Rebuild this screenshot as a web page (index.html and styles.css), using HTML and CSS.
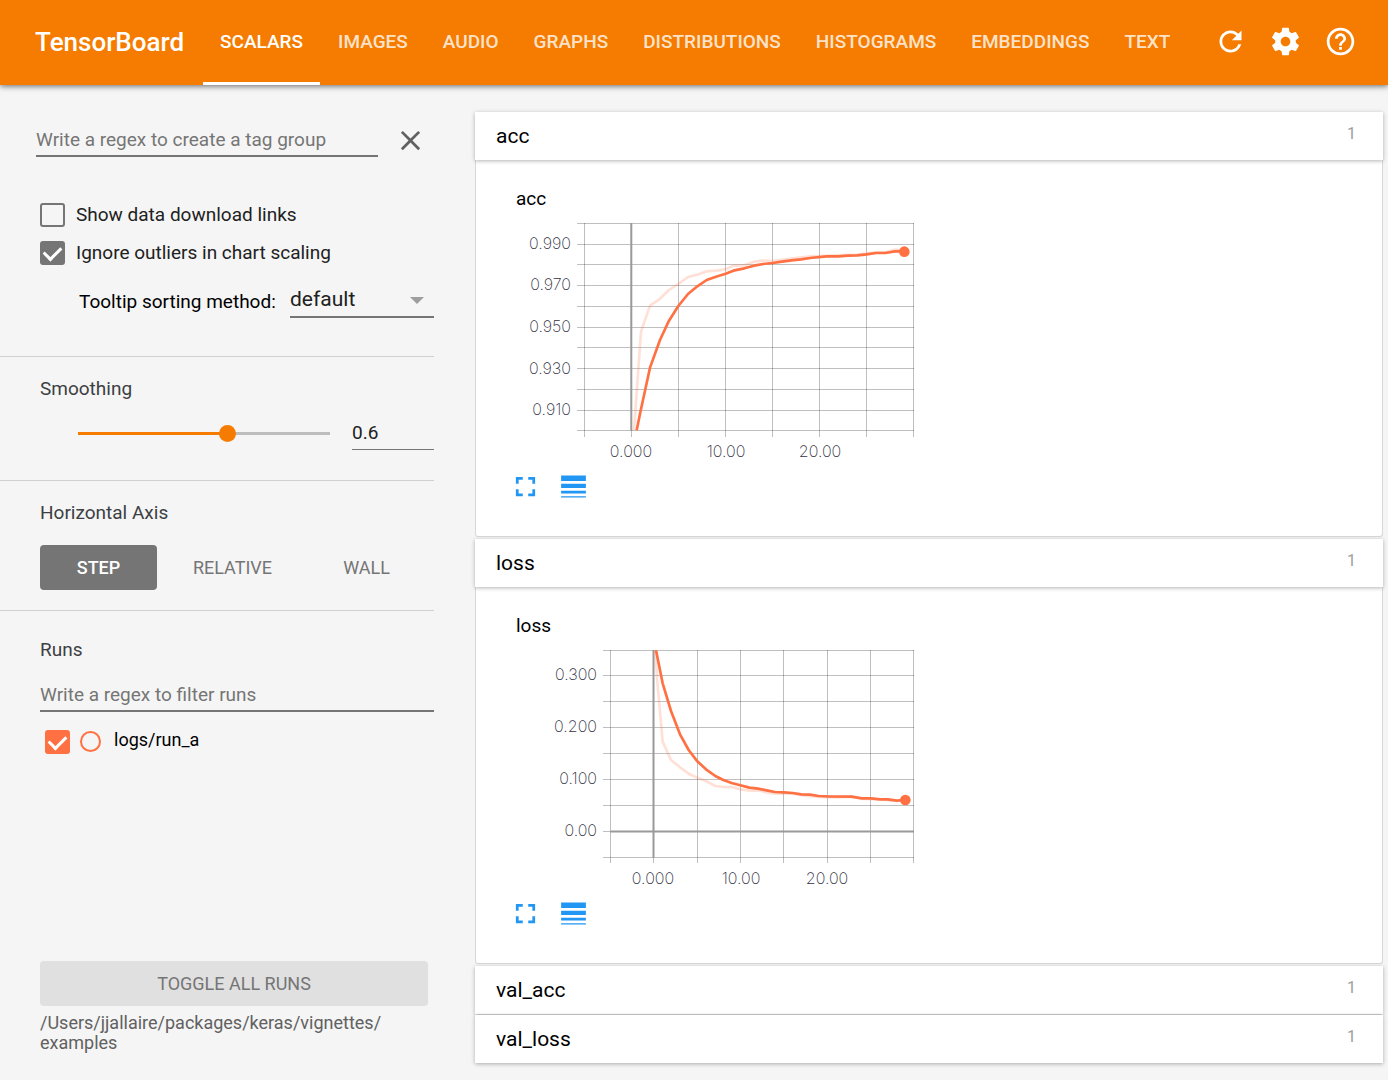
FILE: index.html
```html
<!DOCTYPE html>
<html lang="en">
<head>
<meta charset="utf-8">
<meta name="viewport" content="width=device-width, initial-scale=1">
<title>TensorBoard</title>
<link rel="stylesheet" href="styles.css">
</head>
<body>
<header class="toolbar">
  <h1 class="brand">TensorBoard</h1>
  <nav class="tabs">
    <a class="tab tab-active" href="#scalars">SCALARS</a>
    <a class="tab" href="#images">IMAGES</a>
    <a class="tab" href="#audio">AUDIO</a>
    <a class="tab" href="#graphs">GRAPHS</a>
    <a class="tab" href="#distributions">DISTRIBUTIONS</a>
    <a class="tab" href="#histograms">HISTOGRAMS</a>
    <a class="tab" href="#embeddings">EMBEDDINGS</a>
    <a class="tab" href="#text">TEXT</a>
  </nav>
  <div class="actions">
    <button class="icon-button" type="button" aria-label="Refresh">
      <svg class="icon" viewBox="0 0 24 24"><path d="M17.65 6.35C16.2 4.9 14.21 4 12 4c-4.42 0-7.99 3.58-7.99 8s3.57 8 7.99 8c3.73 0 6.84-2.55 7.73-6h-2.08c-.82 2.33-3.04 4-5.65 4-3.31 0-6-2.69-6-6s2.69-6 6-6c1.66 0 3.14.69 4.22 1.78L13 11h7V4l-2.35 2.35z"/></svg>
    </button>
    <button class="icon-button" type="button" aria-label="Settings">
      <svg class="icon" viewBox="0 0 24 24"><path d="M19.43 12.98c.04-.32.07-.64.07-.98s-.03-.66-.07-.98l2.11-1.65c.19-.15.24-.42.12-.64l-2-3.46c-.12-.22-.39-.3-.61-.22l-2.49 1c-.52-.4-1.08-.73-1.69-.98l-.38-2.65C14.46 2.18 14.25 2 14 2h-4c-.25 0-.46.18-.49.42l-.38 2.65c-.61.25-1.17.59-1.69.98l-2.49-1c-.23-.09-.49 0-.61.22l-2 3.46c-.13.22-.07.49.12.64l2.11 1.65c-.04.32-.07.65-.07.98s.03.66.07.98l-2.11 1.65c-.19.15-.24.42-.12.64l2 3.46c.12.22.39.3.61.22l2.49-1c.52.4 1.08.73 1.69.98l.38 2.65c.03.24.24.42.49.42h4c.25 0 .46-.18.49-.42l.38-2.65c.61-.25 1.17-.59 1.69-.98l2.49 1c.23.09.49 0 .61-.22l2-3.46c.12-.22.07-.49-.12-.64l-2.11-1.65zM12 15.5c-1.93 0-3.5-1.57-3.5-3.5s1.57-3.5 3.5-3.5 3.5 1.57 3.5 3.5-1.57 3.5-3.5 3.5z"/></svg>
    </button>
    <button class="icon-button" type="button" aria-label="Help">
      <svg class="icon" viewBox="0 0 24 24"><path d="M11 18h2v-2h-2v2zm1-16C6.48 2 2 6.48 2 12s4.48 10 10 10 10-4.48 10-10S17.52 2 12 2zm0 18c-4.41 0-8-3.59-8-8s3.59-8 8-8 8 3.59 8 8-3.59 8-8 8zm0-14c-2.21 0-4 1.79-4 4h2c0-1.1.9-2 2-2s2 .9 2 2c0 2-3 1.75-3 5h2c0-2.25 3-2.5 3-5 0-2.21-1.79-4-4-4z"/></svg>
    </button>
  </div>
</header>

<div class="layout">
  <aside class="sidebar">
    <section class="panel panel-options">
      <div class="tag-group">
        <input class="field" type="text" placeholder="Write a regex to create a tag group" aria-label="Tag group regex">
        <button class="icon-button icon-close" type="button" aria-label="Clear">
          <svg class="icon" viewBox="0 0 24 24"><path d="M19 6.41L17.59 5 12 10.59 6.41 5 5 6.41 10.59 12 5 17.59 6.41 19 12 13.41 17.59 19 19 17.59 13.41 12z"/></svg>
        </button>
      </div>
      <div class="options">
        <label class="option"><input class="check" type="checkbox">Show data download links</label>
        <label class="option"><input class="check" type="checkbox" checked>Ignore outliers in chart scaling</label>
      </div>
      <div class="sorting">
        <label class="sorting-label" for="sort">Tooltip sorting method:</label>
        <div class="dropdown">
          <select class="field select" id="sort">
            <option>default</option>
            <option>descending</option>
            <option>ascending</option>
            <option>nearest</option>
          </select>
        </div>
      </div>
    </section>

    <section class="panel panel-smoothing">
      <h2 class="panel-title" id="smoothing">Smoothing</h2>
      <div class="smoothing">
        <input class="slider" type="range" min="0" max="1" step="0.1" value="0.6" aria-labelledby="smoothing">
        <input class="field number" type="text" value="0.6" aria-labelledby="smoothing">
      </div>
    </section>

    <section class="panel panel-axis">
      <h2 class="panel-title">Horizontal Axis</h2>
      <div class="axis-modes">
        <button class="mode mode-active" type="button">STEP</button>
        <button class="mode" type="button">RELATIVE</button>
        <button class="mode" type="button">WALL</button>
      </div>
    </section>

    <section class="panel panel-runs">
      <h2 class="panel-title">Runs</h2>
      <input class="field" type="text" placeholder="Write a regex to filter runs" aria-label="Filter runs">
      <div class="run">
        <input class="check check-run" type="checkbox" id="run-a" checked>
        <input class="isolate" type="radio" name="isolate" aria-label="Show only logs/run_a">
        <label class="run-name" for="run-a">logs/run_a</label>
      </div>
      <div class="runs-footer">
        <button class="toggle" type="button">TOGGLE ALL RUNS</button>
        <p class="logdir">/Users/jjallaire/packages/keras/vignettes/<wbr>examples</p>
      </div>
    </section>
  </aside>

  <main class="content">
    <section class="category">
      <button class="category-head" type="button"><span>acc</span><span class="count">1</span></button>
      <div class="category-body">
        <h3 class="chart-title">acc</h3>
        <svg class="chart" viewBox="516 214 400 252" role="img" aria-label="acc by step">
          <path class="grid" d="M577 223.5H914M577 244.5H914M577 264.5H914M577 285.5H914M577 306.5H914M577 327.5H914M577 347.5H914M577 368.5H914M577 389.5H914M577 410.5H914M577 430.5H914M584.5 223V437M678.5 223V437M725.5 223V437M772.5 223V437M819.5 223V437M866.5 223V437M913.5 223V437M631.5 431V437"/>
          <path class="zero" d="M631.3 223V431"/>
          <g class="curves" transform="translate(470 180) scale(.33333)">
            <polyline class="raw" points="492,751 513,455 540,377 568,358 597,330 625,312 654,291 682,284 710,274 738,272 767,268 790,257 823,256 852,245 880,242 908,243 964,236 1020,229 1077,227 1162,224 1218,217 1246,217 1275,209 1303,210"/>
            <polyline class="smooth" points="500,751 512,692 540,563 570,480 597,422 625,378 654,342 682,319 710,300 738,290 767,281 790,272 823,265 852,257 880,252 908,249 936,245 964,241 993,238 1020,234 1070,229 1105,229 1134,227 1162,226 1190,223 1218,219 1246,219 1275,214 1303,214"/>
            <circle class="dot" cx="1303" cy="215" r="16"/>
          </g>
          <g class="ticks ticks-y">
            <text x="571" y="249">0.990</text><text x="571" y="290">0.970</text><text x="571" y="332">0.950</text><text x="571" y="374">0.930</text><text x="571" y="415">0.910</text>
          </g>
          <g class="ticks ticks-x">
            <text x="631" y="457">0.000</text><text x="726" y="457">10.00</text><text x="820" y="457">20.00</text>
          </g>
        </svg>
        <div class="chart-actions">
          <button class="icon-button" type="button" aria-label="Fit domain to data"><svg class="icon" viewBox="0 0 24 24"><path d="M7 14H5v5h5v-2H7v-3zm-2-4h2V7h3V5H5v5zm12 7h-3v2h5v-5h-2v3zM14 5v2h3v3h2V5h-5z"/></svg></button>
          <button class="icon-button" type="button" aria-label="Toggle log scale"><svg class="icon" viewBox="0 0 24 24"><path d="M3 17h18v-2H3v2zm0 3h18v-1H3v1zm0-7h18v-3H3v3zm0-9v4h18V4H3z"/></svg></button>
        </div>
      </div>
    </section>

    <section class="category">
      <button class="category-head" type="button"><span>loss</span><span class="count">1</span></button>
      <div class="category-body">
        <h3 class="chart-title">loss</h3>
        <svg class="chart" viewBox="516 641 400 252" role="img" aria-label="loss by step">
          <path class="grid" d="M603 650.5H914M603 675.5H914M603 701.5H914M603 727.5H914M603 753.5H914M603 779.5H914M603 805.5H914M603 857.5H914M603 831.5H610M610.5 650V863M697.5 650V863M740.5 650V863M783.5 650V863M827.5 650V863M870.5 650V863M913.5 650V863M653.5 858V863"/>
          <path class="zero" d="M653.5 650V858M610 831.5H914"/>
          <g class="curves" transform="translate(470 610) scale(.33333)">
            <polyline class="raw" points="556,121 562,215 578,395 603,450 630,472 656,491 682,503 708,513 736,528 760,531 785,531 811,538 840,542 870,542 890,547 915,551 970,551 1000,556 1050,561 1100,562 1140,560 1180,567 1230,568 1280,573 1306,570"/>
            <polyline class="smooth" points="558,121 578,220 603,303 630,373 656,420 682,454 708,478 736,498 760,510 785,519 811,526 838,533 864,536 890,541 915,546 942,547 968,549 994,553 1020,554 1046,558 1072,559 1145,560 1176,565 1204,565 1230,568 1254,568 1280,572 1306,570"/>
            <circle class="dot" cx="1306" cy="570" r="16"/>
          </g>
          <g class="ticks ticks-y">
            <text x="597" y="680">0.300</text><text x="597" y="732">0.200</text><text x="597" y="784">0.100</text><text x="597" y="836">0.00</text>
          </g>
          <g class="ticks ticks-x">
            <text x="653" y="884">0.000</text><text x="741" y="884">10.00</text><text x="827" y="884">20.00</text>
          </g>
        </svg>
        <div class="chart-actions">
          <button class="icon-button" type="button" aria-label="Fit domain to data"><svg class="icon" viewBox="0 0 24 24"><path d="M7 14H5v5h5v-2H7v-3zm-2-4h2V7h3V5H5v5zm12 7h-3v2h5v-5h-2v3zM14 5v2h3v3h2V5h-5z"/></svg></button>
          <button class="icon-button" type="button" aria-label="Toggle log scale"><svg class="icon" viewBox="0 0 24 24"><path d="M3 17h18v-2H3v2zm0 3h18v-1H3v1zm0-7h18v-3H3v3zm0-9v4h18V4H3z"/></svg></button>
        </div>
      </div>
    </section>

    <section class="category">
      <button class="category-head" type="button"><span>val_acc</span><span class="count">1</span></button>
    </section>
    <section class="category">
      <button class="category-head" type="button"><span>val_loss</span><span class="count">1</span></button>
    </section>
  </main>
</div>
</body>
</html>
```
FILE: styles.css
```css
* {
  box-sizing: border-box;
}

body {
  margin: 0;
  min-height: 100vh;
  display: flex;
  flex-direction: column;
  background: #f5f5f5;
  color: #000;
  font: 400 19px/24px Roboto, sans-serif;
}

button,
input,
select {
  margin: 0;
  padding: 0;
  border: 0;
  background: none;
  color: inherit;
  font: inherit;
}

h1,
h2,
h3,
p {
  margin: 0;
}

/* Toolbar */
.toolbar {
  display: flex;
  align-items: center;
  height: 85px;
  padding: 0 31px 0 35px;
  background: #f57c00;
  color: #fff;
  box-shadow: 0 1px 6px rgba(0, 0, 0, 0.6);
}

.brand {
  width: 168px;
  padding-bottom: 2px;
  font-size: 26px;
  line-height: 32px;
  font-weight: 500;
}

.tabs {
  display: flex;
  align-self: stretch;
  gap: 1px;
}

.tab {
  display: flex;
  align-items: center;
  padding: 0 17px;
  border-bottom: 3px solid transparent;
  border-top: 1px solid transparent;
  color: rgba(255, 255, 255, 0.8);
  font-size: 19px;
  font-weight: 500;
  text-decoration: none;
}

.tab-active {
  color: #fff;
  border-bottom-color: #fff;
}

.actions {
  display: flex;
  gap: 22px;
  margin-left: auto;
  padding-bottom: 2px;
}

.icon-button {
  display: flex;
  cursor: pointer;
}

.icon {
  display: block;
  width: 33px;
  height: 33px;
  fill: currentColor;
}

/* Page columns */
.layout {
  flex: 1;
  display: grid;
  grid-template-columns: 434px minmax(0, 1fr);
  column-gap: 41px;
}

.sidebar {
  display: flex;
  flex-direction: column;
}

.content {
  padding: 27px 5px 17px 0;
  display: flex;
  flex-direction: column;
  gap: 1px;
}

/* Sidebar */
.panel {
  padding: 20px 0 20px 40px;
  border-bottom: 1px solid #d0d0d0;
}

.panel-options {
  padding: 38px 0 38px 36px;
}

.panel-title {
  color: #3c4043;
  font-size: 19px;
  font-weight: 400;
  line-height: 24px;
}

.field {
  width: 100%;
  height: 34px;
  border-bottom: 2px solid #757575;
  border-radius: 0;
  color: #212121;
  outline: none;
}

.field::placeholder {
  color: #757575;
  opacity: 1;
}

.tag-group {
  display: flex;
  align-items: center;
  gap: 16px;
  padding-right: 7px;
}

.icon-close {
  color: #616161;
}

.options {
  display: grid;
  gap: 14px;
  padding: 46px 0 0 4px;
}

.option {
  display: flex;
  align-items: center;
  gap: 11px;
  color: #212121;
}

.check {
  appearance: none;
  flex: none;
  display: grid;
  place-items: start center;
  width: 25px;
  height: 24px;
  border: 2px solid #757575;
  border-radius: 3px;
}

.check:checked {
  background: #757575;
}

.check:checked::after {
  content: "";
  width: 8px;
  height: 14px;
  border: solid #fff;
  border-width: 0 3px 3px 0;
  transform: rotate(45deg);
}

.sorting {
  display: flex;
  align-items: center;
  justify-content: space-between;
  padding: 16px 0 0 43px;
}

.sorting-label {
  padding-top: 4px;
}

.dropdown {
  position: relative;
  width: 144px;
}

.dropdown::after {
  content: "";
  position: absolute;
  right: 10px;
  top: 16px;
  border: solid transparent;
  border-width: 7px 7px 0;
  border-top-color: #9e9e9e;
  pointer-events: none;
}

.select {
  appearance: none;
  height: 37px;
  font-size: 21px;
}

.smoothing {
  display: flex;
  align-items: center;
  gap: 22px;
  padding: 15px 0 10px 38px;
}

.slider {
  appearance: none;
  flex: 1;
  min-width: 0;
  height: 17px;
  background: linear-gradient(90deg, #f57c00 60%, #bdbdbd 60%) center / 100% 3px no-repeat;
}

.slider::-webkit-slider-thumb {
  appearance: none;
  width: 17px;
  height: 17px;
  border-radius: 50%;
  background: #f57c00;
}

.number {
  width: 82px;
  border-bottom-width: 1px;
}

.axis-modes {
  display: flex;
  gap: 17px;
  padding-top: 20px;
}

.mode {
  width: 117px;
  height: 45px;
  border-radius: 4px;
  color: #757575;
  font-size: 18px;
}

.mode-active {
  background: #757575;
  color: #fff;
  font-weight: 500;
}

.panel-runs {
  flex: 1;
  display: flex;
  flex-direction: column;
  padding: 27px 0 27px 40px;
  border-bottom: 0;
}

.panel-runs .field {
  margin-top: 16px;
}

.run {
  display: flex;
  align-items: center;
  gap: 10px;
  padding: 16px 0 0 5px;
}

.check-run {
  border-color: #ff7043;
}

.check-run:checked {
  background: #ff7043;
}

.isolate {
  appearance: none;
  width: 21px;
  height: 21px;
  border: 2px solid #ff7043;
  border-radius: 50%;
}

.run-name {
  padding: 0 0 3px 3px;
  font-size: 18px;
}

.runs-footer {
  margin-top: auto;
}

.toggle {
  display: block;
  width: calc(100% - 6px);
  height: 45px;
  border-radius: 4px;
  background: #e0e0e0;
  color: #757575;
  font-size: 18px;
}

.logdir {
  padding-top: 7px;
  color: #616161;
  font-size: 18px;
  line-height: 20px;
}

/* Chart categories */
.category-head {
  position: relative;
  display: flex;
  justify-content: space-between;
  width: 100%;
  height: 48px;
  padding: 12px 27px 12px 21px;
  background: #fff;
  box-shadow: 0 1px 4px rgba(0, 0, 0, 0.3);
  font-size: 21px;
  line-height: 24px;
  text-align: left;
}

.count {
  color: #9e9e9e;
  font-size: 16px;
  line-height: 20px;
}

.category-body {
  height: 377px;
  margin-bottom: 1px;
  padding: 27px 40px;
  border: 1px solid #d8d8d8;
  border-top: 0;
  border-radius: 0 0 3px 3px;
  background: #fff;
}

.chart-title {
  font-size: 19px;
  font-weight: 400;
  line-height: 24px;
}

.chart {
  display: block;
  width: 400px;
  height: 252px;
  margin-top: 3px;
}

.grid,
.zero {
  fill: none;
  stroke: #000;
  stroke-opacity: 0.25;
}

.zero {
  stroke: #999;
  stroke-opacity: 1;
  stroke-width: 2;
}

.raw,
.smooth {
  fill: none;
  stroke: #ff7043;
  stroke-width: 8;
  stroke-linejoin: round;
}

.raw {
  stroke-opacity: 0.22;
}

.dot {
  fill: #ff7043;
}

.ticks {
  fill: #32313f;
  font: 200 16px Inter, "Liberation Sans", sans-serif;
}

.ticks-y {
  text-anchor: end;
}

.ticks-x {
  text-anchor: middle;
}

.chart-actions {
  display: flex;
  gap: 15px;
  margin: 4px 0 0 -7px;
  color: #2196f3;
}
```
